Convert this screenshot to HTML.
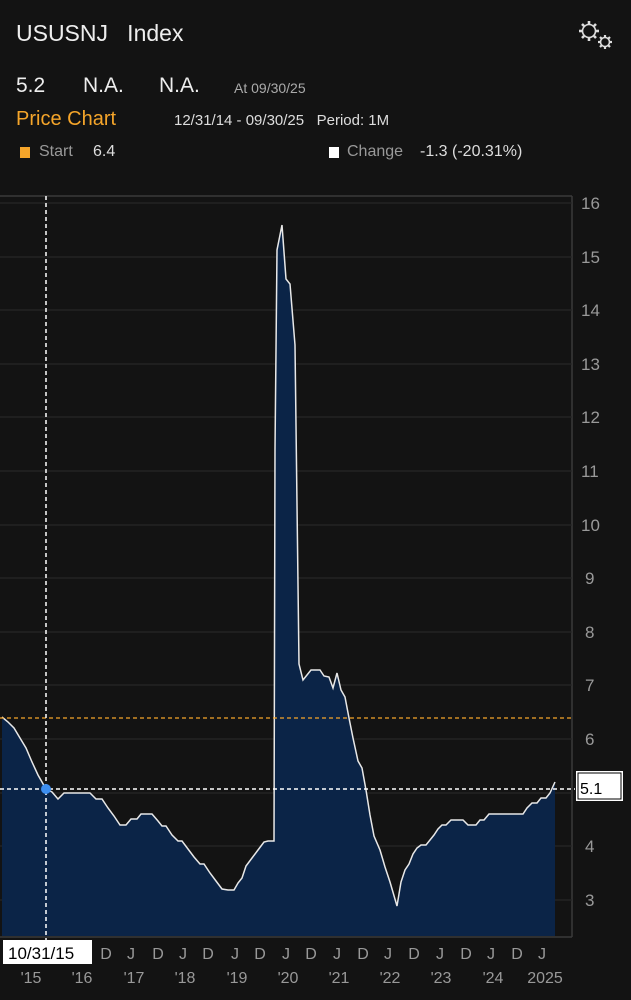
<!DOCTYPE html>
<html><head><meta charset="utf-8"><style>
html,body{margin:0;padding:0;background:#131313;width:631px;height:1000px;overflow:hidden;font-family:"Liberation Sans","DejaVu Sans",sans-serif;color:#e8e8e8}
.t{position:absolute;white-space:nowrap}
</style></head><body>
<div class="t" style="left:16px;top:20px;font-size:23px;color:#eee">USUSNJ&nbsp;&nbsp;&nbsp;Index</div>
<svg class="t" style="left:576px;top:18px" width="40" height="34" viewBox="0 0 40 34">
<g fill="none" stroke="#ddd" stroke-width="1.6">
<circle cx="13" cy="13" r="6.5"/>
<g stroke-width="2.6"><line x1="13" y1="3" x2="13" y2="6"/><line x1="13" y1="20" x2="13" y2="23"/><line x1="3" y1="13" x2="6" y2="13"/><line x1="20" y1="13" x2="23" y2="13"/><line x1="6" y1="6" x2="8" y2="8"/><line x1="18" y1="18" x2="20" y2="20"/><line x1="6" y1="20" x2="8" y2="18"/><line x1="18" y1="8" x2="20" y2="6"/></g>
<circle cx="29" cy="24" r="4.5"/>
<g stroke-width="2.2"><line x1="29" y1="17" x2="29" y2="19"/><line x1="29" y1="29" x2="29" y2="31"/><line x1="22" y1="24" x2="24" y2="24"/><line x1="34" y1="24" x2="36" y2="24"/><line x1="24" y1="19" x2="25.5" y2="20.5"/><line x1="32.5" y1="27.5" x2="34" y2="29"/><line x1="24" y1="29" x2="25.5" y2="27.5"/><line x1="32.5" y1="20.5" x2="34" y2="19"/></g>
</g></svg>
<div class="t" style="left:16px;top:74px;font-size:21px;color:#eee">5.2</div>
<div class="t" style="left:83px;top:74px;font-size:21px;color:#eee">N.A.</div>
<div class="t" style="left:159px;top:74px;font-size:21px;color:#eee">N.A.</div>
<div class="t" style="left:234px;top:80px;font-size:14px;color:#aaa">At 09/30/25</div>
<div class="t" style="left:16px;top:108px;font-size:20px;color:#f5a52a">Price Chart</div>
<div class="t" style="left:174px;top:112px;font-size:15px;color:#ddd">12/31/14 - 09/30/25&nbsp;&nbsp;&nbsp;Period: 1M</div>
<div class="t" style="left:20px;top:147px;width:10px;height:11px;background:#f5a52a"></div>
<div class="t" style="left:39px;top:143px;font-size:16px;color:#999">Start</div>
<div class="t" style="left:93px;top:143px;font-size:16px;color:#ddd">6.4</div>
<div class="t" style="left:329px;top:147px;width:10px;height:11px;background:#fff"></div>
<div class="t" style="left:347px;top:143px;font-size:16px;color:#999">Change</div>
<div class="t" style="left:420px;top:143px;font-size:16px;color:#ddd">-1.3 (-20.31%)</div>

<svg class="t" style="left:0;top:0" width="631" height="1000">
<line x1="0" y1="196" x2="572" y2="196" stroke="#3a3a3a" stroke-width="1.5"/>
<line x1="572" y1="196" x2="572" y2="937" stroke="#3a3a3a" stroke-width="1.5"/>
<line x1="0" y1="937" x2="572" y2="937" stroke="#3a3a3a" stroke-width="1.5"/>
<g stroke="#272727" stroke-width="1.3">
<line x1="0" y1="203" x2="572" y2="203"/><line x1="0" y1="257" x2="572" y2="257"/><line x1="0" y1="310" x2="572" y2="310"/><line x1="0" y1="364" x2="572" y2="364"/><line x1="0" y1="417" x2="572" y2="417"/><line x1="0" y1="471" x2="572" y2="471"/><line x1="0" y1="525" x2="572" y2="525"/><line x1="0" y1="578" x2="572" y2="578"/><line x1="0" y1="632" x2="572" y2="632"/><line x1="0" y1="685" x2="572" y2="685"/><line x1="0" y1="739" x2="572" y2="739"/><line x1="0" y1="793" x2="572" y2="793"/><line x1="0" y1="846" x2="572" y2="846"/><line x1="0" y1="900" x2="572" y2="900"/>
</g>
<polygon fill="#0b2447" points="2,936 2,717 8,722 14,728 20,738 26,748 32,762 38,775 46,789 52,792 58,799 64,793 90,793 96,799 102,799 108,808 114,816 120,825 126,825 131,819 137,819 141,814 152,814 158,821 162,826 166,826 172,835 178,841 182,841 188,849 194,857 200,864 204,864 210,873 216,881 222,889 228,890 234,890 238,883 242,878 246,866 252,858 258,850 264,842 268,841 272,841 274,841 275,450 277,250 282,225 286,279 290,284 295,345 299,664 303,680 307,675 311,670 320,670 324,676 329,677 333,688 337,673 341,690 345,697 349,718 353,738 358,761 362,768 366,790 370,815 374,836 380,850 385,867 390,882 397,906 401,882 405,870 409,864 413,854 417,848 421,845 426,845 430,840 434,835 438,829 442,825 446,825 451,820 463,820 468,825 476,825 480,820 484,820 489,814 523,814 527,808 532,803 537,803 541,798 546,798 550,793 555,782 555,936"/>
<polyline fill="none" stroke="#e8e8e8" stroke-width="1.5" points="2,717 8,722 14,728 20,738 26,748 32,762 38,775 46,789 52,792 58,799 64,793 90,793 96,799 102,799 108,808 114,816 120,825 126,825 131,819 137,819 141,814 152,814 158,821 162,826 166,826 172,835 178,841 182,841 188,849 194,857 200,864 204,864 210,873 216,881 222,889 228,890 234,890 238,883 242,878 246,866 252,858 258,850 264,842 268,841 272,841 274,841 275,450 277,250 282,225 286,279 290,284 295,345 299,664 303,680 307,675 311,670 320,670 324,676 329,677 333,688 337,673 341,690 345,697 349,718 353,738 358,761 362,768 366,790 370,815 374,836 380,850 385,867 390,882 397,906 401,882 405,870 409,864 413,854 417,848 421,845 426,845 430,840 434,835 438,829 442,825 446,825 451,820 463,820 468,825 476,825 480,820 484,820 489,814 523,814 527,808 532,803 537,803 541,798 546,798 550,793 555,782"/>
<line x1="0" y1="718" x2="572" y2="718" stroke="#f5a52a" stroke-width="1.3" stroke-dasharray="4,3"/>
<line x1="0" y1="789" x2="575" y2="789" stroke="#fff" stroke-width="1.5" stroke-dasharray="4,3"/>
<line x1="46" y1="196" x2="46" y2="940" stroke="#fff" stroke-width="1.5" stroke-dasharray="4,3"/>
<circle cx="46" cy="789" r="5" fill="#3d8ef0"/>
<g fill="#999" font-size="17" font-family="Liberation Sans,sans-serif">
<text x="581" y="209">16</text><text x="581" y="263">15</text><text x="581" y="316">14</text><text x="581" y="370">13</text><text x="581" y="423">12</text><text x="581" y="477">11</text><text x="581" y="531">10</text><text x="585" y="584">9</text><text x="585" y="638">8</text><text x="585" y="691">7</text><text x="585" y="745">6</text><text x="585" y="852">4</text><text x="585" y="906">3</text>
</g>
<rect x="576" y="771" width="47" height="30" fill="#fff"/>
<rect x="578" y="773" width="43" height="26" fill="#fff" stroke="#000" stroke-width="1"/>
<text x="580" y="794" font-size="16" fill="#000" font-family="Liberation Sans,sans-serif">5.1</text>
<rect x="3" y="940" width="89" height="24" fill="#fff"/>
<text x="8" y="959" font-size="17" fill="#000" font-family="Liberation Sans,sans-serif">10/31/15</text>
<g fill="#999" font-size="16" font-family="Liberation Sans,sans-serif" text-anchor="middle">
<text x="106" y="959">D</text><text x="131" y="959">J</text><text x="158" y="959">D</text><text x="183" y="959">J</text><text x="208" y="959">D</text><text x="235" y="959">J</text><text x="260" y="959">D</text><text x="286" y="959">J</text><text x="311" y="959">D</text><text x="337" y="959">J</text><text x="363" y="959">D</text><text x="388" y="959">J</text><text x="414" y="959">D</text><text x="440" y="959">J</text><text x="466" y="959">D</text><text x="491" y="959">J</text><text x="517" y="959">D</text><text x="542" y="959">J</text>
<text x="31" y="983">'15</text><text x="82" y="983">'16</text><text x="134" y="983">'17</text><text x="185" y="983">'18</text><text x="237" y="983">'19</text><text x="288" y="983">'20</text><text x="339" y="983">'21</text><text x="390" y="983">'22</text><text x="441" y="983">'23</text><text x="493" y="983">'24</text><text x="545" y="983">2025</text>
</g>
</svg>
</body></html>
